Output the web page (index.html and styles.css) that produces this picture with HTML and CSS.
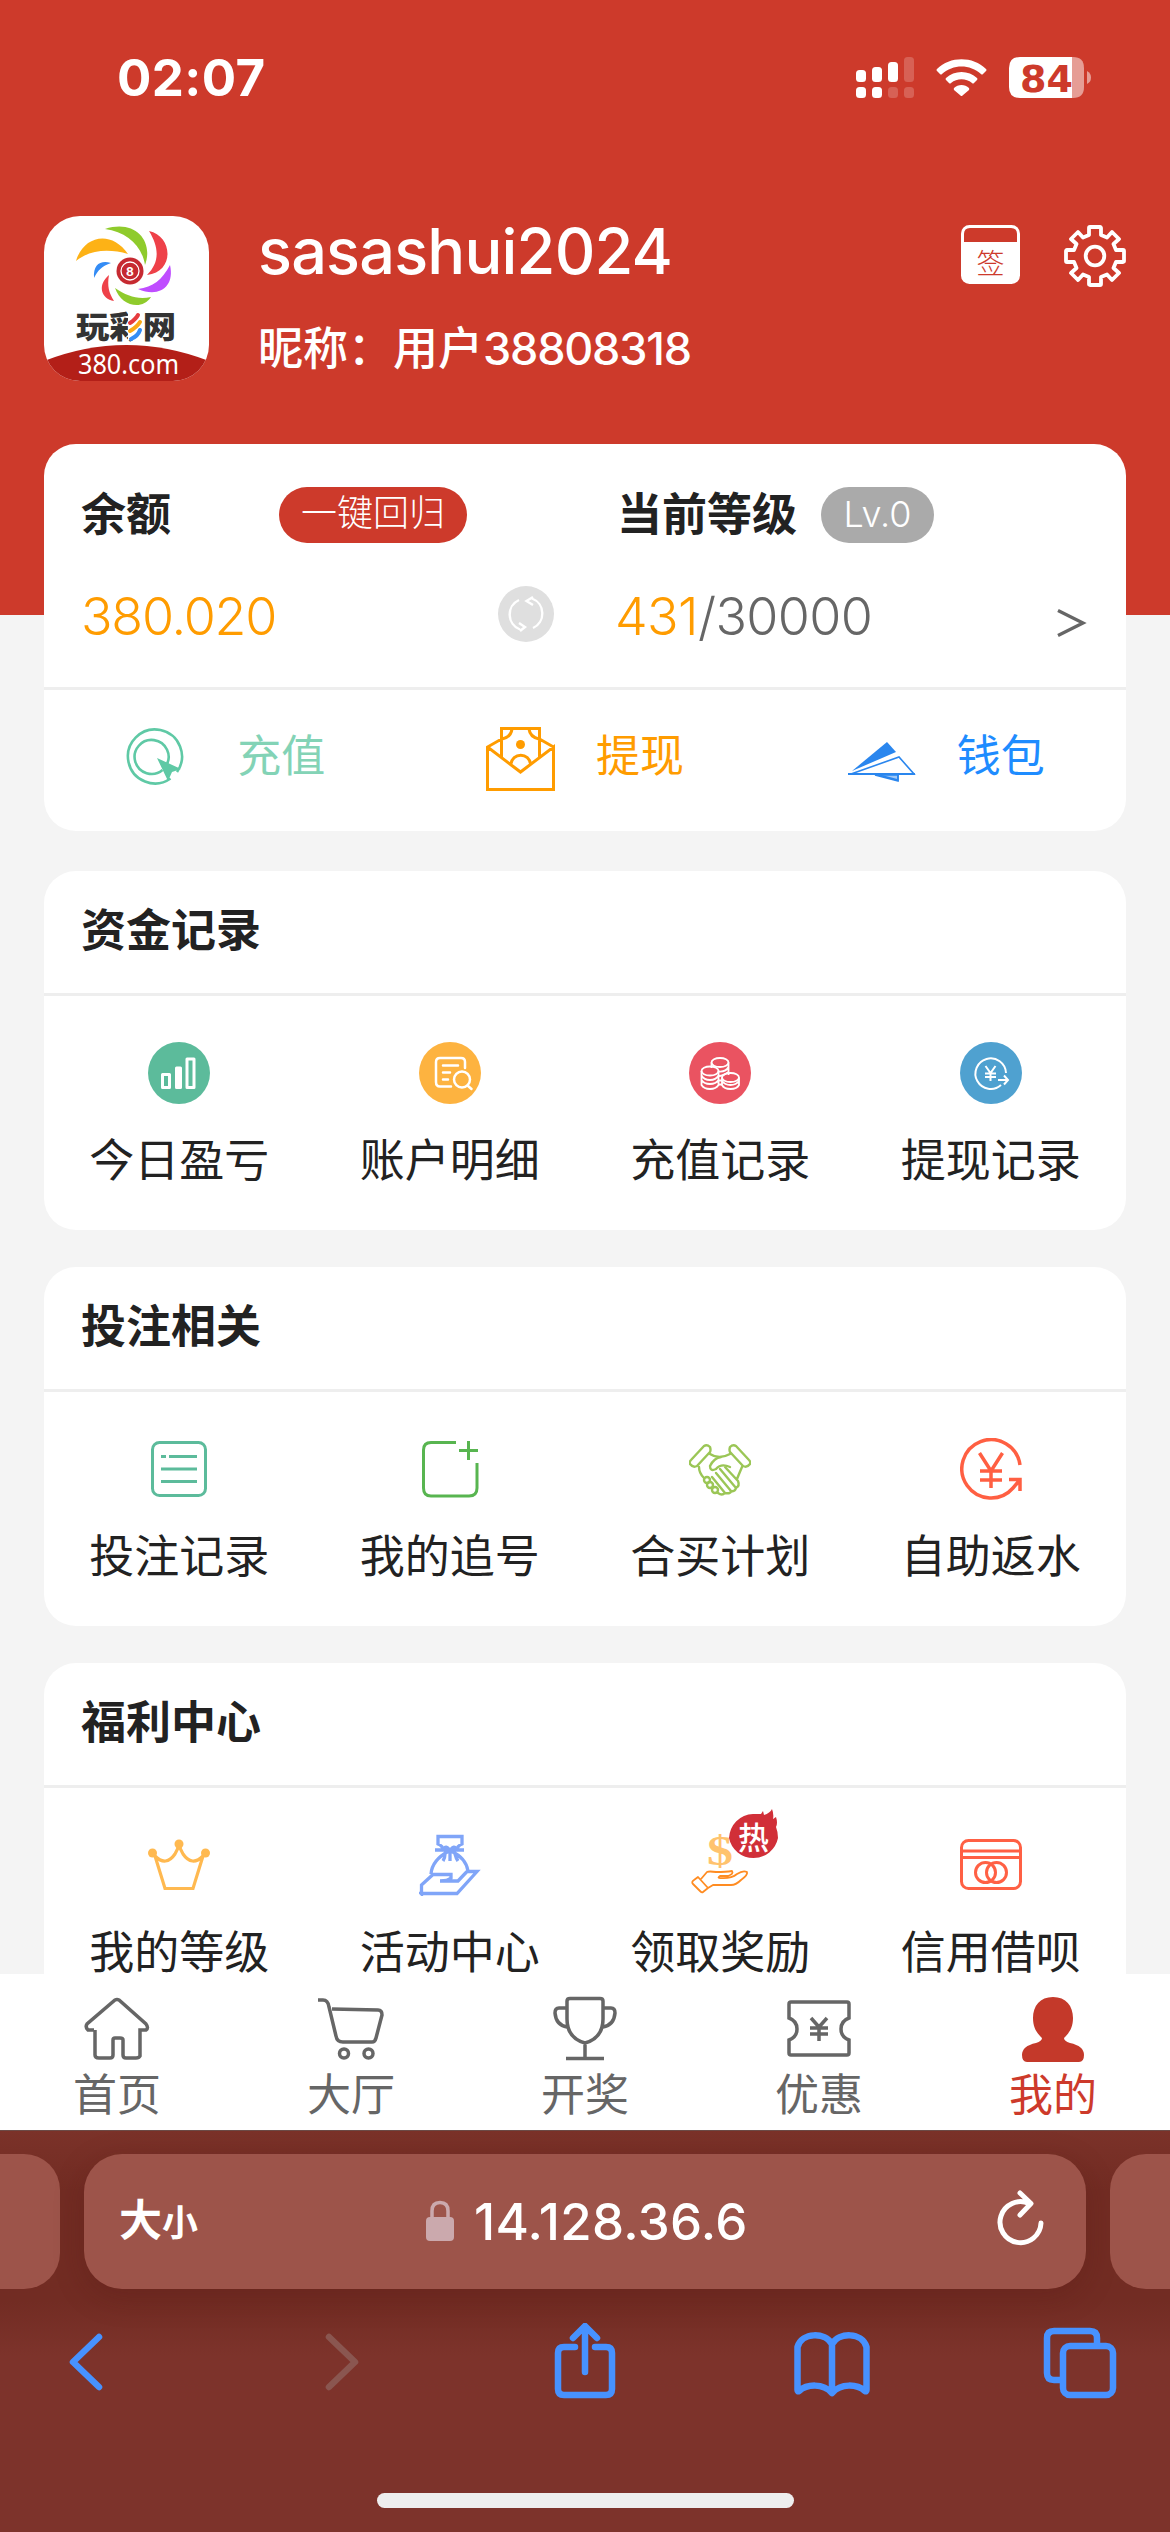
FILE: index.html
```html
<!DOCTYPE html>
<html lang="zh-CN">
<head>
<meta charset="utf-8">
<title>我的</title>
<link rel="stylesheet" href="styles.css">
</head>
<body>
<div class="screen">
  <main class="page">
    <header class="hero">
      <div class="status">
        <span class="status-time">02:07</span>
        <svg class="status-icons" width="236" height="42" viewBox="0 0 236 42" fill="#fff">
          <rect x="0" y="13" width="10" height="12" rx="3.5"/><rect x="16" y="10" width="10" height="15" rx="3.5"/><rect x="32" y="5" width="10" height="20" rx="3.5"/><rect x="48" y="0" width="10" height="25" rx="3.5" opacity=".2"/>
          <rect x="0" y="30" width="10" height="11" rx="3.5"/><rect x="16" y="30" width="10" height="11" rx="3.5"/><rect x="32" y="30" width="10" height="11" rx="3.5" opacity=".2"/><rect x="48" y="30" width="10" height="11" rx="3.5" opacity=".2"/>
          <path d="M81 12C94-1 117-1 130 12Q131 13 130 14L127 17Q126 18 125 17C114 7 97 7 86 17Q85 18 84 17L81 14Q80 13 81 12Z"/>
          <path d="M90 21C98 13 113 13 121 21Q122 22 121 23L118 26Q117 27 116 26C110 21 101 21 95 26Q94 27 93 26L90 23Q89 22 90 21Z"/>
          <path d="M98 31C102 27 109 27 113 31Q113.500 32 113 33L106.500 38.500Q105.500 39.500 104.500 38.500L98 33Q97.500 32 98 31Z"/>
          <path d="M164 0H216V41H164Q153 41 153 30V11Q153 0 164 0Z"/>
          <path d="M216 0H217Q228 0 228 11V30Q228 41 217 41H216Z" opacity=".5"/>
          <path d="M231 14Q235 16 235 20.500Q235 25 231 27Z" opacity=".5"/>
          <text x="164" y="34.500" class="battery-text" textLength="53" lengthAdjust="spacingAndGlyphs">84</text>
        </svg>
      </div>
      <div class="profile">
        <svg class="avatar" width="165" height="165" viewBox="0 0 165 165">
          <rect width="165" height="165" fill="#fff"/>
          <path fill="#fdb216" d="M32 45C39 20 67 13 84 38C66 33 47 33 32 45Z"/>
          <path fill="#8fcb2c" d="M61 13C91 3 110 25 101 49C98 30 83 16 61 13Z"/>
          <path fill="#ee4149" d="M105 15C129 20 131 56 103 59C115 47 116 33 105 15Z"/>
          <path fill="#bf4dff" d="M126 49C131 71 115 82 94 73C109 71 118 64 126 49Z"/>
          <path fill="#8fcb2c" d="M71 72C77 90 98 95 107 81C94 84 83 80 71 72Z"/>
          <path fill="#ee4149" d="M65 59C53 69 57 83 70 85C65 77 63 70 65 59Z"/>
          <path fill="#348cf5" d="M50 62C49 48 57 44 67 47C58 50 54 54 50 62Z"/>
          <circle cx="86" cy="55" r="13.500" fill="#c62a31"/><circle cx="86" cy="55" r="9" fill="none" stroke="#fff" stroke-width="1.300"/>
          <text x="86" y="59.500" class="ball-text">8</text>
          <text x="32" y="121.500" class="brand-text" textLength="100" lengthAdjust="spacingAndGlyphs">玩彩网</text>
          <path d="M84 96H99V124H84Z" fill="#fff"/>
          <g fill="none" stroke-width="4" stroke-linecap="round"><path stroke="#e63b3f" d="M94 99Q92 103 86 107"/><path stroke="#fba916" d="M96 106Q93 111 86 115"/><path stroke="#348cf5" d="M96 114Q94 120 87 123"/></g>
          <path fill="#b31f18" d="M0 145Q82 113 165 145V165H0Z"/>
          <text x="34" y="158" class="site-text" textLength="101" lengthAdjust="spacingAndGlyphs">380.com</text>
        </svg>
        <div class="profile-names">
          <div class="username">sasashui2024</div>
          <div class="nickname">昵称：用户<span class="nickname-id">38808318</span></div>
        </div>
        <div class="profile-actions">
          <svg width="59" height="59" viewBox="0 0 59 59">
            <rect width="59" height="59" rx="8.500" fill="#fff"/><path fill="#cd3a2b" d="M3 17V9Q3 3 9 3H50Q56 3 56 9V17Z"/>
            <text x="29.500" y="49" class="sign-text">签</text>
          </svg>
          <svg width="62" height="62" viewBox="-31 -31 62 62" fill="none" stroke="#fff" stroke-width="3.800" stroke-linejoin="round">
            <circle r="9.300"/>
            <path d="M-6-28Q-6-29-5-29H5Q6-29 6-28V-21L12-18.500L17-24L24-17L18.500-12L21-6H28Q29-6 29-5V5Q29 6 28 6H21L18.500 12L24 17L17 24L12 18.500L6 21V28Q6 29 5 29H-5Q-6 29-6 28V21L-12 18.500L-17 24L-24 17L-18.500 12L-21 6H-28Q-29 6-29 5V-5Q-29-6-28-6H-21L-18.500-12L-24-17L-17-24L-12-18.500L-6-21Z"/>
          </svg>
        </div>
      </div>
    </header>

    <section class="card wallet">
      <div class="summary">
        <div class="balance">
          <div class="summary-head"><b class="title balance-title">余额</b><span class="pill pill-red">一键回归</span></div>
          <div class="summary-value"><span class="amount">380.020</span>
            <svg width="56" height="56" viewBox="0 0 56 56"><circle cx="28" cy="28" r="28" fill="#dfdfdf"/><g fill="none" stroke="#fff" stroke-width="2.400"><path d="M22 43.500A16 16 0 0 1 21 14M34 12.500A16 16 0 0 1 35 42M35 11L28.500 15L35 19M21 37L27 41L22 45"/></g></svg>
          </div>
        </div>
        <div class="level">
          <div class="summary-head"><b class="title">当前等级</b><span class="pill pill-gray">Lv.0</span></div>
          <div class="summary-value"><span class="points"><span class="points-now">431</span>/30000</span>
            <svg class="more" width="30" height="30" viewBox="0 0 30 30"><path d="M1 2.500L26 15L1 27.500" fill="none" stroke="#666" stroke-width="3.300"/></svg>
          </div>
        </div>
      </div>
      <div class="actions">
        <div class="action action-green">
          <svg width="70" height="66" viewBox="0 0 70 66" fill="none" stroke="#5fc9a5" stroke-width="2.600"><path d="M47.500 52.500A27 27 0 1 1 54 46M39.500 44A17 17 0 1 1 43 40"/><path d="M34 32L58 43L49 46L45 55Z" fill="#5fc9a5" stroke="none"/></svg>
          <span>充值</span></div>
        <div class="action action-orange">
          <svg width="70" height="66" viewBox="0 0 70 66" fill="none" stroke="#ff9c00" stroke-width="3"><path d="M1.500 21V63.500H67.500V21L34.500 46L1.500 21L15.500 13V31M15.500 13V2.500H53.500V13V31M53.500 13L67.500 21M26 3Q25 11 16 13M43 3Q44 11 53 13M25 38A9.800 9.800 0 0 1 44.500 38"/><circle cx="34.500" cy="18.500" r="4.500" fill="#ff9c00" stroke="none"/></svg>
          <span>提现</span></div>
        <div class="action action-blue">
          <svg width="70" height="66" viewBox="0 0 70 66" fill="none" stroke="#2a86ee" stroke-width="1.600"><path d="M5 45L40 16L49 26Z" fill="#2a86ee" stroke="none"/><path d="M4 48L52 31L67 48ZM28 48L51 54V48"/><path d="M1 48H68" stroke-width="2"/><path d="M28 49L51 55V49Z" fill="#2a86ee" fill-opacity=".45"/></svg>
          <span>钱包</span></div>
      </div>
    </section>

    <section class="card">
      <h2 class="card-title">资金记录</h2>
      <div class="grid">
        <div class="cell"><svg class="icon" viewBox="0 0 62 62"><circle cx="31" cy="31" r="31" fill="#5cbb9b"/><g fill="none" stroke="#fff" stroke-width="3" stroke-linejoin="round"><rect x="14.500" y="32.500" width="7" height="13"/><rect x="28.500" y="26" width="4" height="19.500" fill="#fff"/><rect x="39" y="17" width="7" height="28.500"/></g></svg><span>今日盈亏</span></div>
        <div class="cell"><svg class="icon" viewBox="0 0 62 62"><circle cx="31" cy="31" r="31" fill="#fdb340"/><g fill="none" stroke="#fff" stroke-width="2.500" stroke-linecap="round"><path d="M32 44.500H21Q17 44.500 17 40V20Q17 16 21 16H42Q46 16 46 20V26M24 23.500H39M24 30.500H31M24 37.500H29"/><circle cx="43" cy="37.500" r="8"/><path d="M48.500 43.500L52.500 47"/></g></svg><span>账户明细</span></div>
        <div class="cell"><svg class="icon" viewBox="0 0 62 62"><circle cx="31" cy="31" r="31" fill="#ea5361"/><g fill="none" stroke="#fff" stroke-width="1.800"><ellipse cx="31" cy="20.500" rx="8.500" ry="4.500"/><path d="M22.500 20.500V26M39.500 20.500V33M30 29.500Q37 30 39.500 25M30 34Q34 34 39.500 30M30 38.500H33M30 42.500H33"/><ellipse cx="21" cy="29" rx="8.500" ry="4.500"/><path d="M12.500 29V43Q15 47 21 47Q27 47 29.500 43V29M12.500 33.500Q15 38 21 38Q27 38 29.500 33.500M12.500 38Q15 42 21 42Q27 42 29.500 38"/><ellipse cx="41.500" cy="35.500" rx="8.500" ry="4.500"/><path d="M33 35.500V43Q35 47 41.500 47Q48 47 50 43V35.500M33 39Q36 43 41.500 43Q47 43 50 39"/></g></svg><span>充值记录</span></div>
        <div class="cell"><svg class="icon" viewBox="0 0 62 62"><circle cx="31" cy="31" r="31" fill="#4fa1d0"/><g fill="none" stroke="#fff" stroke-width="2"><path d="M46 31A15.300 15.300 0 1 0 41 43M25.500 24L30.500 31L35.500 24M30.500 30.500V39M25 31.500H36M25 35H36M38 38H48M44 33.500L48 38L44 42.500"/></g></svg><span>提现记录</span></div>
      </div>
    </section>

    <section class="card">
      <h2 class="card-title">投注相关</h2>
      <div class="grid">
        <div class="cell"><svg class="icon" viewBox="0 0 62 62" fill="none" stroke="#5cbb9b" stroke-width="3"><rect x="4.500" y="4.500" width="53" height="53" rx="7"/><path d="M13 18.500H18M21 18.500H49M13 31H49M13 43.500H49"/></svg><span>投注记录</span></div>
        <div class="cell"><svg class="icon" viewBox="0 0 62 62" fill="none" stroke="#58b550" stroke-width="3"><path d="M37 4.500H12Q4.500 4.500 4.500 12V50Q4.500 58 12 58H50Q58 58 58 50V25M49.500 3V22M40 12.500H59"/></svg><span>我的追号</span></div>
        <div class="cell"><svg class="icon" viewBox="0 0 62 62" fill="none" stroke="#9bc656" stroke-width="2.400" stroke-linejoin="round" stroke-linecap="round"><path d="M2 22L15 8Q18 6 21 9Q22 12 21 14L8 28Q4 30 1 26Q0 24 2 22ZM60 22L47 8Q44 6 41 9Q40 12 41 14L54 28Q58 30 61 26Q62 24 60 22Z"/><path d="M21 16Q30 22 41 16M10 29Q10 35 15 40M53 29Q50 36 48 41M41 29Q32 25 27 31Q21 34 21 28Q25 20 32 19M31 31L47 50M36 29L49 43Q51 48 47 50M27 35L42 53Q46 54 47 50M23 39L36 55Q42 56 42 53M36 55Q33 58 29 55"/><circle cx="18" cy="42" r="3"/><circle cx="21" cy="47" r="3"/><circle cx="26" cy="52" r="3"/></svg><span>合买计划</span></div>
        <div class="cell"><svg class="icon" viewBox="0 0 62 62" fill="none" stroke="#ff5f42" stroke-width="3.500"><path d="M60 27A29.200 29.200 0 1 0 53 50L59 43M49 41.500H60V53M19.500 15L31 33L42.500 15M31 32V50M20 33H42M20 42H42"/></svg><span>自助返水</span></div>
      </div>
    </section>

    <section class="card">
      <h2 class="card-title">福利中心</h2>
      <div class="grid">
        <div class="cell"><svg class="icon" viewBox="0 0 62 62" fill="none" stroke="#ffb950" stroke-width="3.200"><path d="M7 22L17 54.500H45L55 22Q44 33 35 20L31 12L27 20Q18 33 7 22Z"/><g fill="#ffb950" stroke="none"><circle cx="31" cy="10" r="4.500"/><circle cx="4.500" cy="19" r="4.500"/><circle cx="57.500" cy="19" r="4.500"/></g></svg><span>我的等级</span></div>
        <div class="cell"><svg class="icon" viewBox="0 0 62 62" fill="none" stroke="#80a5f8" stroke-width="3.300"><path d="M19 2.500H43V10Q38 12 38 16Q35 10 31 17Q27 10 24 16Q24 12 19 10ZM16 16H45M30 17Q13 26 12 40M32 17Q47 24 49 37M26 20Q26 24 24 27M36 20Q37 24 39 27M31 18V27M2.500 60V51L14 40.500H32V44Q29 47 21 47H39L48 37.500H58L38 59.500H2Z"/></svg><span>活动中心</span></div>
        <div class="cell cell-hot"><svg class="icon" viewBox="0 0 62 62" fill="none"><text x="31" y="31" class="dollar" textLength="26" lengthAdjust="spacingAndGlyphs">$</text><g stroke="#ff8c22" stroke-width="1.800" stroke-linejoin="round"><path d="M4 50Q2 48 5 46L9 43L19 54L14 58Q13 59 11 57ZM12 45L18 38Q20 37 27 38Q37 38 43 37Q45 40 39 42H31Q28 44 31 44Q42 45 48 40Q54 36 58 38Q59 41 52 46Q47 51 42 51L24 51L19 54"/></g></svg>
          <svg class="hot" width="51" height="54" viewBox="0 0 51 54"><path fill="#d12f38" d="M1 29A25 25 0 0 1 25 5Q31 5 33 5L35 2L36 6Q42 4 44 0Q46 5 45 10L48 8Q50 14 48 18Q50 23 50 29A25 25 0 0 1 1 29Z"/><text x="25.500" y="40" class="hot-text">热</text></svg>
          <span>领取奖励</span></div>
        <div class="cell"><svg class="icon" viewBox="0 0 62 62" fill="none" stroke="#ff6044" stroke-width="3"><rect x="1.500" y="6.500" width="59" height="48" rx="7"/><path d="M2 17H60M2 23.500H60"/><circle cx="25.500" cy="38.500" r="10"/><circle cx="36.500" cy="38.500" r="10"/></svg><span>信用借呗</span></div>
      </div>
    </section>
  </main>

  <nav class="tabs">
    <div class="tab"><svg width="70" height="70" viewBox="0 0 70 70"><path d="M12 34H6Q3 31 5 28L33 4Q35 3 37 4L64 28Q67 32 64 34H58V60Q57 62 54 62H44Q41 62 41 59V44Q41 42 38 42H33Q31 42 31 44V59Q31 62 28 62H17Q13 62 13 59V34"/></svg><span>首页</span></div>
    <div class="tab"><svg width="70" height="70" viewBox="0 0 70 70"><path d="M2 4H7Q12 4 13 11L20 40Q21 46 27 46H56Q59 46 60 42L66 19Q66 14 62 14L16 13"/><circle cx="28" cy="57.500" r="4.500"/><circle cx="52.500" cy="57.500" r="4.500"/></svg><span>大厅</span></div>
    <div class="tab"><svg width="70" height="70" viewBox="0 0 70 70"><path d="M17 5Q17 2.500 20 2.500H50Q53 2.500 53 5V23Q53 42 35 47Q17 42 17 23ZM17 12H9Q5 12 5 17Q6 29 17 31M53 12H61Q65 12 65 17Q64 29 53 31M35 46V62M16 62.500H54"/></svg><span>开奖</span></div>
    <div class="tab"><svg width="70" height="70" viewBox="0 0 70 70"><path d="M7 6H63Q65 6 65 8V22Q57 25 57 33Q57 41 65 44V57Q65 59 63 59H7Q5 59 5 57V44Q13 41 13 33Q13 25 5 22V8Q5 6 7 6ZM27 22L35 31L43 22M35 31V45M26 32H44M26 38H44"/></svg><span>优惠</span></div>
    <div class="tab tab-active"><svg width="70" height="70" viewBox="0 0 70 70"><path d="M35 1C48 1 55 10 55 22C55 33 50 38 46 42Q46 45 52 47Q66 50 66 59Q66 66 61 66H9Q4 66 4 59Q4 50 18 47Q24 45 24 42C20 38 15 33 15 22C15 10 22 1 35 1Z"/></svg><span>我的</span></div>
  </nav>

  <footer class="browser">
    <div class="address-row">
      <div class="side-tab side-left"></div>
      <div class="address">
        <span class="text-size">大<small>小</small></span>
        <span class="host"><svg width="28" height="42" viewBox="0 0 28 42"><rect y="17" width="28" height="24" rx="4" fill="#cba9ad"/><path d="M6 18V11Q6 2.500 14 2.500Q22 2.500 22 11V18" fill="none" stroke="#cba9ad" stroke-width="3.500"/></svg><span>14.128.36.6</span></span>
        <svg class="reload" width="48" height="58" viewBox="0 0 48 58" fill="none" stroke="#fff" stroke-width="5" stroke-linecap="round" stroke-linejoin="round"><path d="M44 33A20.500 20.500 0 1 1 32 13.500M23 3L34 13.500L23 25"/></svg>
      </div>
      <div class="side-tab side-right"></div>
    </div>
    <div class="toolbar">
      <svg width="36" height="76" viewBox="0 0 36 76"><path d="M30 14L4 39L30 64" /></svg>
      <svg class="disabled" width="36" height="76" viewBox="0 0 36 76"><path d="M5 14L31 39L5 64"/></svg>
      <svg class="share" width="62" height="76" viewBox="0 0 62 76"><path d="M21 24H10Q4 24 4 30V66Q4 72 10 72H52Q58 72 58 66V30Q58 24 52 24H41M31 49V4M19 15L31 3L43 15"/></svg>
      <svg class="book" width="76" height="76" viewBox="0 0 76 76"><path d="M38 70C29 60 13 61 5 68Q3.500 69 3.500 67V24C8 9 31 9 38 21C45 9 68 9 72.500 24V67Q72.500 69 71 68C63 61 47 60 38 70ZM38 21V68"/></svg>
      <svg class="windows" width="74" height="76" viewBox="0 0 74 76"><path d="M54 22V15Q54 8 47 8H11Q4 8 4 15V50Q4 57 11 57H18"/><rect x="20" y="23" width="50" height="49" rx="7"/></svg>
    </div>
    <div class="home-bar"></div>
  </footer>
</div>
</body>
</html>
```
FILE: styles.css
```css
* { box-sizing: border-box; }
body { margin: 0; background: #f4f4f4; font-family: Inter, "Noto Sans CJK SC", sans-serif; color: #222; }
svg { display: block; flex: none; }
.screen { width: 1170px; height: 2532px; display: flex; flex-direction: column; overflow: hidden; }
.page { height: 1974px; flex: none; overflow: hidden; background: linear-gradient(#cd3a2b 615px, #f4f4f4 615px); }
.hero { height: 444px; color: #fff; }
.status { height: 216px; display: flex; justify-content: space-between; align-items: flex-start; padding: 57px 78px 0 117px; }
.status-time { font-size: 51px; line-height: 42px; font-weight: 750; letter-spacing: .4px; }
.battery-text { font-family: "DejaVu Sans", sans-serif; font-size: 38px; font-weight: 700; fill: #cd3a2b; }
.profile { display: flex; padding: 0 44px; align-items: flex-start; }
.avatar { border-radius: 36px; }
.ball-text { font-size: 12px; font-weight: 700; fill: #fff; text-anchor: middle; }
.brand-text { font-size: 31px; font-weight: 900; fill: #333; }
.site-text { font-family: "Noto Sans", sans-serif; font-size: 28px; fill: #fff; }
.sign-text { font-size: 28px; font-weight: 300; fill: #cd3a2b; text-anchor: middle; }
.profile-names { margin-left: 49px; }
.username { font-size: 63px; line-height: 70px; font-weight: 500; letter-spacing: -.8px; }
.nickname { margin-top: 31px; font-size: 45px; line-height: 64px; font-weight: 500; white-space: nowrap; }
.nickname-id { letter-spacing: -1.2px; }
.profile-actions { margin: 9px 0 0 auto; display: flex; align-items: flex-start; gap: 44px; }

.card { margin: 0 44px 37px; height: 359px; background: #fff; border-radius: 32px; }
.wallet { height: 387px; margin-bottom: 40px; }
.summary { height: 246px; border-bottom: 3px solid #eee; display: flex; }
.balance { width: 535px; padding-left: 37px; }
.level { flex: 1; padding-left: 38px; }
.summary-head { margin-top: 43px; height: 56px; display: flex; align-items: center; }
.title { font-size: 45px; line-height: 56px; }
.balance-title { width: 198px; }
.pill { height: 56px; border-radius: 28px; color: #fff; font-size: 36px; line-height: 53px; font-weight: 300; text-align: center; }
.pill-red { width: 188px; background: #cd3a2b; }
.pill-gray { width: 113px; margin-left: 24px; background: #aaa; line-height: 54px; }
.summary-value { margin-top: 43px; height: 56px; display: flex; justify-content: space-between; align-items: center; font-size: 52px; font-weight: 350; }
.balance .summary-value { padding-right: 25px; }
.level .summary-value { padding-right: 39px; color: #666; }
.amount, .points-now { color: #ff9c00; }
.amount, .points { position: relative; top: 2px; letter-spacing: -1.2px; }
.points { left: -2px; letter-spacing: -.6px; }
.more { margin-top: 18px; }
.actions { display: grid; grid-template-columns: repeat(3, 1fr); height: 141px; }
.action { display: flex; justify-content: center; gap: 40px; padding-top: 36px; font-size: 44px; line-height: 61px; }
.action-green { color: #83d3b6; gap: 44px; }
.action-orange { color: #ff9c00; }
.action-blue { color: #1e8cff; }

.card-title { margin: 0; height: 125px; padding: 0 37px; border-bottom: 3px solid #eee; font-size: 45px; line-height: 120px; font-weight: 700; }
.grid { display: grid; grid-template-columns: repeat(4, 1fr); padding-top: 46px; }
.cell { display: flex; flex-direction: column; align-items: center; gap: 35px; font-size: 45px; line-height: 43px; position: relative; }
.icon { width: 62px; height: 62px; }
.dollar { font-family: "Liberation Serif", serif; font-size: 42px; font-weight: 700; fill: #ffc36e; text-anchor: middle; }
.hot { position: absolute; left: 143px; top: -25px; }
.hot-text { font-size: 31px; font-weight: 500; fill: #fff; text-anchor: middle; }

.tabs { height: 156px; flex: none; display: grid; grid-template-columns: repeat(5, 1fr); background: #fff; }
.tab { display: flex; flex-direction: column; align-items: center; padding-top: 22px; font-size: 44px; line-height: 59px; color: #666; }
.tab svg { fill: none; stroke: #666; stroke-width: 3.500; }
.tab-active { color: #cd3a2b; }
.tab-active svg { fill: #c4392a; stroke: none; }

.browser { height: 402px; flex: none; padding-top: 23px; background: linear-gradient(#7b3229, #722c23 60px, #722c23 170px, #7d332b 225px); border-top: 1px solid #6b4a46; }
.address-row { display: flex; justify-content: space-between; height: 135px; }
.side-tab { width: 60px; background: #9d544a; }
.side-left { border-radius: 0 36px 36px 0; }
.side-right { border-radius: 36px 0 0 36px; }
.address { width: 1002px; display: flex; align-items: center; padding: 0 41px 0 35px; background: #9d544a; border-radius: 38px; color: #fff; box-shadow: 0 8px 30px rgba(80, 20, 15, .25); }
.text-size { width: 90px; font-size: 43px; line-height: 60px; font-weight: 700; white-space: nowrap; }
.text-size small { font-size: 36px; }
.host { display: flex; align-items: center; gap: 20px; font-size: 51px; font-weight: 550; letter-spacing: .3px; margin-left: 217px; }
.host svg { margin-top: -2px; }
.reload { margin: -6px 0 0 auto; }
.toolbar { display: flex; padding: 34px 54px 0 69px; height: 204px; }
.toolbar svg { fill: none; stroke: #4792ff; stroke-width: 6.500; stroke-linecap: round; stroke-linejoin: round; }
.toolbar .disabled { stroke: #8a5650; margin-left: 219px; }
.toolbar .share { margin-left: 194px; }
.toolbar .book { margin-left: 178px; }
.toolbar .windows { margin-left: 173px; }
.home-bar { width: 417px; height: 15px; margin: 0 auto; background: #eee; border-radius: 8px; }
```
